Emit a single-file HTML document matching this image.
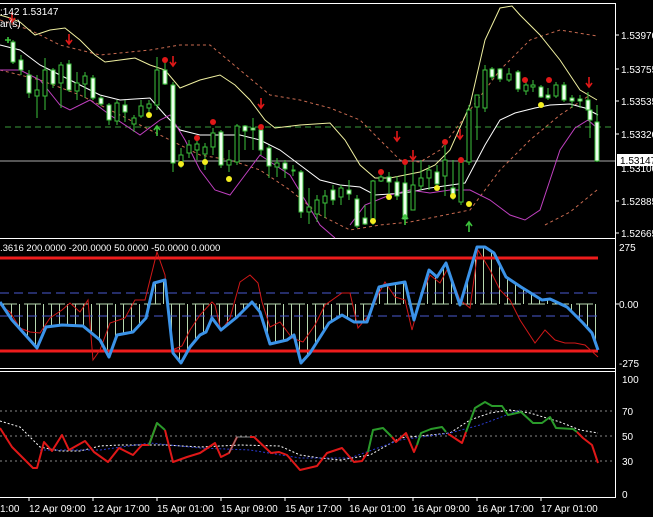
<!DOCTYPE html>
<html><head><meta charset="utf-8"><style>
html,body{margin:0;padding:0;background:#000;width:653px;height:517px;overflow:hidden}
svg{display:block}
text{font-family:"Liberation Sans",sans-serif;font-size:10px;fill:#fff}
</style></head><body>
<svg width="653" height="517" viewBox="0 0 653 517">
<defs>
<pattern id="vl" width="8" height="10" patternUnits="userSpaceOnUse"><rect x="3" y="0" width="1" height="10" fill="#b8d8b0"/></pattern>
<clipPath id="c1"><polygon points="0,302 12,320 37,348 46,327 62,325 83,326 100,340 109,357 117,335 133,332 146,318 154,283 165,280 173,353 181,363 190,347 200,335 206,332 212,318 221,330 237,317 252,302 260,312 270,344 287,340 294,335 301,363 310,353 329,323 342,315 354,322 367,322 379,287 387,285 405,282 414,320 429,270 437,277 446,263 460,305 477,247 485,247 494,253 506,277 521,287 542,300 550,299 567,307 583,323 592,333 598,350 598,304 0,304"/></clipPath>
</defs>
<!-- frames -->
<g stroke="#fff" stroke-width="1" fill="none">
<line x1="0" y1="3.5" x2="616" y2="3.5"/>
<line x1="615.5" y1="3" x2="615.5" y2="498"/>
<line x1="0" y1="238.5" x2="616" y2="238.5"/>
<line x1="0" y1="368.5" x2="616" y2="368.5"/>
<line x1="0" y1="371.5" x2="616" y2="371.5"/>
<line x1="0" y1="497.5" x2="616" y2="497.5"/>
</g>
<!-- main chart -->
<line x1="5" y1="127" x2="615" y2="127" stroke="#3a9a3a" stroke-dasharray="6,4"/>
<line x1="0" y1="161" x2="615" y2="161" stroke="#aaa"/>
<g fill="none" stroke-width="1">
<polyline stroke="#c86a50" stroke-dasharray="3,3" points="0,20 30,30 60,45 100,55 150,50 180,45 210,45 240,70 270,95 300,100 330,108 360,120 380,140 400,160 420,162 440,150 470,110 500,70 530,40 560,30 597,36"/>
<polyline stroke="#c86a50" stroke-dasharray="3,3" points="0,70 40,80 80,95 110,110 140,125 170,140 200,155 230,160 260,170 290,190 320,215 350,230 380,225 410,222 430,218 470,210 500,170 530,140 560,115 590,95"/>
<polyline stroke="#c86a50" stroke-dasharray="3,3" points="545,225 570,212 597,190"/>
<polyline stroke="#f0f0a0" points="0,15 10,18 20,22 35,35 50,30 65,28 80,40 95,55 105,62 120,60 135,58 150,65 165,70 180,88 200,80 220,75 235,85 250,100 265,120 275,128 300,125 330,123 345,140 360,165 375,178 390,178 405,175 420,172 435,165 450,150 470,105 485,40 500,8 512,6 520,15 540,35 560,60 580,90 597,100"/>
<polyline stroke="#fff" points="0,45 20,50 40,65 60,75 80,85 100,95 120,100 150,98 165,115 180,130 200,135 220,135 240,135 260,140 280,150 300,165 320,180 340,185 360,187 375,195 390,194 410,192 430,188 465,183 485,145 500,120 515,113 535,108 550,105 570,104 585,108 598,115"/>
<polyline stroke="#c040c0" points="0,70 20,70 40,80 60,105 70,110 90,100 110,115 140,135 160,120 170,115 185,140 200,170 215,190 230,195 245,175 260,155 275,165 290,175 305,200 320,225 335,238"/>
<polyline stroke="#c040c0" points="350,225 365,205 390,195 410,190 430,193 450,190 470,190 490,200 510,215 525,220 540,210 550,180 560,150 575,128 588,120 597,128"/>
</g>
<!-- candles -->
<g id="candles" stroke="#3cc23c" stroke-width="1">
<line x1="13" y1="40" x2="13" y2="64"/><rect x="11" y="42" width="4" height="20" fill="#efe"/>
<line x1="21" y1="55" x2="21" y2="75"/><rect x="19" y="60" width="4" height="10" fill="#efe"/>
<line x1="29" y1="70" x2="29" y2="98"/><rect x="27" y="75" width="4" height="18" fill="#efe"/>
<line x1="37" y1="75" x2="37" y2="118"/><rect x="35" y="90" width="4" height="6" fill="#000"/>
<line x1="45" y1="58" x2="45" y2="110"/><rect x="43" y="70" width="4" height="26" fill="#000"/>
<line x1="53" y1="68" x2="53" y2="88"/><rect x="51" y="70" width="4" height="14" fill="#efe"/>
<line x1="61" y1="62" x2="61" y2="108"/><rect x="59" y="65" width="4" height="18" fill="#000"/>
<line x1="69" y1="60" x2="69" y2="92"/><rect x="67" y="64" width="4" height="26" fill="#efe"/>
<line x1="77" y1="72" x2="77" y2="100"/><rect x="75" y="83" width="4" height="8" fill="#000"/>
<line x1="85" y1="72" x2="85" y2="98"/><rect x="83" y="76" width="4" height="8" fill="#000"/>
<line x1="93" y1="75" x2="93" y2="100"/><rect x="91" y="78" width="4" height="20" fill="#efe"/>
<line x1="101" y1="96" x2="101" y2="106"/><rect x="99" y="98" width="4" height="6" fill="#efe"/>
<line x1="109" y1="103" x2="109" y2="125"/><rect x="107" y="105" width="4" height="15" fill="#efe"/>
<line x1="117" y1="100" x2="117" y2="125"/><rect x="115" y="103" width="4" height="18" fill="#000"/>
<line x1="125" y1="100" x2="125" y2="122"/><rect x="123" y="105" width="4" height="7" fill="#efe"/>
<line x1="134" y1="115" x2="134" y2="132"/><rect x="132" y="118" width="4" height="6" fill="#000"/>
<line x1="141" y1="100" x2="141" y2="118"/><rect x="139" y="106" width="4" height="10" fill="#000"/>
<line x1="149" y1="100" x2="149" y2="112"/><rect x="147" y="104" width="4" height="4" fill="#000"/>
<line x1="157" y1="57" x2="157" y2="110"/><rect x="155" y="70" width="4" height="35" fill="#000"/>
<line x1="165" y1="62" x2="165" y2="85"/><rect x="163" y="70" width="4" height="14" fill="#efe"/>
<line x1="173" y1="82" x2="173" y2="172"/><rect x="171" y="85" width="4" height="78" fill="#efe"/>
<line x1="181" y1="148" x2="181" y2="168"/><rect x="179" y="155" width="4" height="8" fill="#000"/>
<line x1="189" y1="140" x2="189" y2="158"/><rect x="187" y="145" width="4" height="8" fill="#000"/>
<line x1="197" y1="140" x2="197" y2="160"/><rect x="195" y="144" width="4" height="6" fill="#000"/>
<line x1="205" y1="143" x2="205" y2="170"/><rect x="203" y="147" width="4" height="7" fill="#000"/>
<line x1="213" y1="128" x2="213" y2="155"/><rect x="211" y="133" width="4" height="14" fill="#000"/>
<line x1="221" y1="130" x2="221" y2="168"/><rect x="219" y="132" width="4" height="33" fill="#efe"/>
<line x1="229" y1="150" x2="229" y2="172"/><rect x="227" y="160" width="4" height="5" fill="#000"/>
<line x1="237" y1="124" x2="237" y2="165"/><rect x="235" y="126" width="4" height="36" fill="#000"/>
<line x1="245" y1="125" x2="245" y2="150"/><rect x="243" y="126" width="4" height="5" fill="#efe"/>
<line x1="253" y1="118" x2="253" y2="150"/><rect x="251" y="128" width="4" height="2" fill="#efe"/>
<line x1="261" y1="130" x2="261" y2="155"/><rect x="259" y="130" width="4" height="20" fill="#efe"/>
<line x1="269" y1="145" x2="269" y2="178"/><rect x="267" y="148" width="4" height="18" fill="#efe"/>
<line x1="277" y1="158" x2="277" y2="177"/><rect x="275" y="163" width="4" height="4" fill="#000"/>
<line x1="285" y1="160" x2="285" y2="178"/><rect x="283" y="163" width="4" height="6" fill="#efe"/>
<line x1="293" y1="165" x2="293" y2="176"/><rect x="292" y="170" width="3" height="1" fill="#000"/>
<line x1="301" y1="170" x2="301" y2="218"/><rect x="299" y="172" width="4" height="40" fill="#efe"/>
<line x1="309" y1="188" x2="309" y2="224"/><rect x="307" y="207" width="4" height="5" fill="#000"/>
<line x1="317" y1="195" x2="317" y2="222"/><rect x="315" y="200" width="4" height="14" fill="#000"/>
<line x1="325" y1="190" x2="325" y2="218"/><rect x="323" y="196" width="4" height="7" fill="#000"/>
<line x1="333" y1="185" x2="333" y2="205"/><rect x="331" y="190" width="4" height="10" fill="#efe"/>
<line x1="341" y1="185" x2="341" y2="205"/><rect x="339" y="188" width="4" height="9" fill="#000"/>
<line x1="349" y1="180" x2="349" y2="200"/><rect x="347" y="190" width="4" height="4" fill="#efe"/>
<line x1="357" y1="195" x2="357" y2="228"/><rect x="355" y="199" width="4" height="27" fill="#efe"/>
<line x1="365" y1="205" x2="365" y2="225"/><rect x="363" y="218" width="4" height="6" fill="#efe"/>
<line x1="373" y1="180" x2="373" y2="225"/><rect x="371" y="181" width="4" height="40" fill="#000"/>
<line x1="381" y1="172" x2="381" y2="182"/><rect x="379" y="177" width="4" height="4" fill="#000"/>
<line x1="389" y1="172" x2="389" y2="195"/><rect x="387" y="177" width="4" height="5" fill="#efe"/>
<line x1="397" y1="176" x2="397" y2="200"/><rect x="395" y="182" width="4" height="14" fill="#efe"/>
<line x1="405" y1="160" x2="405" y2="220"/><rect x="403" y="183" width="4" height="36" fill="#efe"/>
<line x1="413" y1="162" x2="413" y2="210"/><rect x="411" y="185" width="4" height="25" fill="#000"/>
<line x1="421" y1="160" x2="421" y2="190"/><rect x="419" y="178" width="4" height="8" fill="#000"/>
<line x1="429" y1="165" x2="429" y2="190"/><rect x="427" y="170" width="4" height="8" fill="#000"/>
<line x1="437" y1="165" x2="437" y2="188"/><rect x="435" y="172" width="4" height="12" fill="#efe"/>
<line x1="445" y1="145" x2="445" y2="196"/><rect x="443" y="160" width="4" height="16" fill="#000"/>
<line x1="453" y1="160" x2="453" y2="200"/><rect x="451" y="188" width="4" height="8" fill="#efe"/>
<line x1="461" y1="160" x2="461" y2="205"/><rect x="459" y="162" width="4" height="40" fill="#000"/>
<line x1="469" y1="105" x2="469" y2="165"/><rect x="467" y="110" width="4" height="52" fill="#000"/>
<line x1="477" y1="95" x2="477" y2="140"/><rect x="475" y="95" width="4" height="12" fill="#000"/>
<line x1="485" y1="65" x2="485" y2="112"/><rect x="483" y="70" width="4" height="38" fill="#000"/>
<line x1="492" y1="67" x2="492" y2="80"/><rect x="490" y="69" width="4" height="8" fill="#efe"/>
<line x1="500" y1="68" x2="500" y2="82"/><rect x="498" y="69" width="4" height="10" fill="#efe"/>
<line x1="509" y1="68" x2="509" y2="82"/><rect x="507" y="74" width="4" height="6" fill="#000"/>
<line x1="518" y1="70" x2="518" y2="92"/><rect x="516" y="72" width="4" height="17" fill="#efe"/>
<line x1="526" y1="78" x2="526" y2="95"/><rect x="524" y="85" width="4" height="6" fill="#000"/>
<line x1="533" y1="80" x2="533" y2="92"/><rect x="531" y="85" width="4" height="2" fill="#000"/>
<line x1="541" y1="85" x2="541" y2="98"/><rect x="539" y="87" width="4" height="10" fill="#efe"/>
<line x1="548" y1="88" x2="548" y2="100"/><rect x="546" y="95" width="4" height="3" fill="#efe"/>
<line x1="556" y1="82" x2="556" y2="98"/><rect x="554" y="85" width="4" height="11" fill="#000"/>
<line x1="564" y1="82" x2="564" y2="102"/><rect x="562" y="85" width="4" height="15" fill="#efe"/>
<line x1="572" y1="95" x2="572" y2="108"/><rect x="570" y="98" width="4" height="3" fill="#efe"/>
<line x1="580" y1="95" x2="580" y2="108"/><rect x="578" y="99" width="4" height="2" fill="#efe"/>
<line x1="588" y1="92" x2="588" y2="112"/><rect x="586" y="100" width="4" height="10" fill="#efe"/>
<line x1="590" y1="112" x2="590" y2="138"/><rect x="588" y="110" width="4" height="10" fill="#efe"/>
<line x1="597" y1="105" x2="597" y2="162"/><rect x="595" y="122" width="4" height="39" fill="#efe"/>
</g>
<!-- dots -->
<g fill="#e01818">
<circle cx="165" cy="60" r="3"/><circle cx="213" cy="122" r="3"/><circle cx="197" cy="138" r="3"/><circle cx="261" cy="127" r="3"/><circle cx="381" cy="172" r="3"/><circle cx="405" cy="162" r="3"/><circle cx="445" cy="142" r="3"/><circle cx="461" cy="160" r="3"/><circle cx="525" cy="80" r="3"/><circle cx="549" cy="80" r="3"/>
</g>
<g fill="#f4ee20">
<circle cx="149" cy="115" r="3"/><circle cx="181" cy="164" r="3"/><circle cx="205" cy="162" r="3"/><circle cx="229" cy="179" r="3"/><circle cx="373" cy="221" r="3"/><circle cx="389" cy="197" r="3"/><circle cx="437" cy="188" r="3"/><circle cx="453" cy="196" r="3"/><circle cx="469" cy="204" r="3"/><circle cx="541" cy="105" r="3"/>
</g>
<g stroke="#e01818" stroke-width="1.6" fill="none">
<path d="M12,12v9M9,18l3,4l3,-4"/><path d="M69,34v9M66,40l3,4l3,-4"/><path d="M173,56v9M170,62l3,4l3,-4"/><path d="M261,98v9M258,104l3,4l3,-4"/><path d="M397,131v9M394,137l3,4l3,-4"/><path d="M413,150v9M410,156l3,4l3,-4"/><path d="M460,129v9M457,135l3,4l3,-4"/><path d="M589,77v9M586,83l3,4l3,-4"/><path d="M66,0v0"/>
</g>
<g stroke="#3cc23c" stroke-width="1.6" fill="none">
<path d="M157,136v-9M154,130l3,-4l3,4"/><path d="M405,225v-9M402,219l3,-4l3,4"/><path d="M469,232v-9M466,226l3,-4l3,4"/><path d="M5,40h6M8,37v6"/>
</g>
<text x="0" y="15" style="font-size:10px">:142 1.53147</text>
<text x="0" y="27" style="font-size:10px">ar(s)</text>
<!-- price axis -->
<g>
<line x1="616" y1="35" x2="619" y2="35" stroke="#fff"/><text x="621" y="39">1.53970</text>
<line x1="616" y1="69" x2="619" y2="69" stroke="#fff"/><text x="621" y="73">1.53755</text>
<line x1="616" y1="101" x2="619" y2="101" stroke="#fff"/><text x="621" y="105">1.53535</text>
<line x1="616" y1="134" x2="619" y2="134" stroke="#fff"/><text x="621" y="138">1.53320</text>
<text x="621" y="172">1.53100</text>
<rect x="617" y="154" width="36" height="12" fill="#fff"/><text x="620" y="164" style="fill:#000">1.53147</text>
<line x1="616" y1="201" x2="619" y2="201" stroke="#fff"/><text x="621" y="205">1.52885</text>
<line x1="616" y1="233" x2="619" y2="233" stroke="#fff"/><text x="621" y="237">1.52665</text>
</g>
<!-- panel 1 -->
<rect x="0" y="304" width="598" height="60" fill="url(#vl)" clip-path="url(#c1)"/>
<rect x="0" y="240" width="598" height="64" fill="url(#vl)" clip-path="url(#c1)"/>
<line x1="0" y1="304" x2="598" y2="304" stroke="#b8d8b0" stroke-dasharray="17,7"/>
<line x1="0" y1="293" x2="598" y2="293" stroke="#4a5ad0" stroke-dasharray="9,5"/>
<line x1="0" y1="316" x2="598" y2="316" stroke="#4a5ad0" stroke-dasharray="9,5"/>
<line x1="0" y1="258" x2="598" y2="258" stroke="#ee1c1c" stroke-width="3"/>
<line x1="0" y1="351" x2="598" y2="351" stroke="#ee1c1c" stroke-width="3"/>
<polyline fill="none" stroke="#d01818" stroke-width="1" points="0,305 10,312 20,328 30,332 40,333 50,318 62,310 70,303 80,312 88,300 93,360 100,350 110,323 125,318 135,300 145,300 157,252 165,275 172,350 182,346 190,330 200,315 212,302 215,305 221,331 230,318 240,282 250,275 258,283 262,302 270,327 280,322 292,338 303,342 315,325 325,305 342,293 350,293 358,328 370,314 378,295 385,282 395,297 405,300 412,330 420,300 430,275 440,283 448,268 460,300 470,308 478,250 490,270 500,290 510,300 520,320 535,343 545,330 555,340 565,343 575,343 585,345 598,357"/>
<polyline fill="none" stroke="#3b93e8" stroke-width="3" stroke-linejoin="round" points="0,302 12,320 37,348 46,327 62,325 83,326 100,340 109,357 117,335 133,332 146,318 154,283 165,280 173,353 181,363 190,347 200,335 206,332 212,318 221,330 237,317 252,302 260,312 270,344 287,340 294,335 301,363 310,353 329,323 342,315 354,322 367,322 379,287 387,285 405,282 414,320 429,270 437,277 446,263 460,305 477,247 485,247 494,253 506,277 521,287 542,300 550,299 567,307 583,323 592,333 598,350"/>
<text x="0" y="251" style="font-size:9.5px">.3616 200.0000 -200.0000 50.0000 -50.0000 0.0000</text>
<text x="619" y="251">275</text><line x1="616" y1="304" x2="619" y2="304" stroke="#fff"/><text x="619" y="308">0.00</text><text x="619" y="367">-275</text>
<!-- panel 2 -->
<g stroke="#888" stroke-dasharray="2,3"><line x1="0" y1="411" x2="615" y2="411"/><line x1="0" y1="436" x2="615" y2="436"/><line x1="0" y1="461" x2="615" y2="461"/></g>
<polyline fill="none" stroke="#fff" stroke-dasharray="2,2" points="0,421 20,427 40,447 60,451 80,451 100,446 120,445 165,445 200,447 240,445 280,446 300,455 320,458 340,460 370,455 400,438 420,436 450,433 470,420 490,413 510,410 530,413 560,422 580,430 598,433"/>
<polyline fill="none" stroke="#2a3ad0" stroke-dasharray="2,2" points="40,450 100,450 150,443 200,448 250,450 300,458 350,458 400,440 450,433 480,425 520,410"/>
<g fill="none" stroke-width="2" stroke-linejoin="round">
<polyline stroke="#e01818" points="0,428 12,447 33,468 37,468 44,442 52,451 62,435 69,450 85,441 94,452 108,462 119,448 133,455 142,445 149,445 157,423"/>
<polyline stroke="#2a9a2a" points="149,445 157,423 165,430"/>
<polyline stroke="#e01818" points="165,430 173,462 187,457 200,453 215,443 221,457 229,453 237,437"/>
<polyline stroke="#888" stroke-width="1" points="229,453 237,437 254,437"/>
<polyline stroke="#e01818" points="250,437 254,437 271,453 279,452 287,455 300,470 317,466 327,453 342,448 354,462 362,461 368,452"/>
<polyline stroke="#2a9a2a" points="368,452 373,430 383,428 392,437"/>
<polyline stroke="#e01818" points="392,437 396,442 406,433 414,452 417,445"/>
<polyline stroke="#2a9a2a" points="417,445 421,433 431,429 442,427 446,432"/>
<polyline stroke="#e01818" points="448,434 450,435 462,443 466,432"/>
<polyline stroke="#2a9a2a" points="466,432 475,408 485,402 492,406 502,406 508,415 521,412 533,423 542,423 550,417 556,428 573,429 577,432"/>
<polyline stroke="#e01818" points="577,432 583,438 592,445 598,463"/>
</g>
<text x="622" y="383">100</text><text x="622" y="415">70</text><text x="622" y="440">50</text><text x="622" y="465">30</text><text x="622" y="498">0</text>
<!-- time axis -->
<g>
<text x="0" y="512">1:00</text>
<line x1="29" y1="498" x2="29" y2="501" stroke="#fff"/><text x="29" y="512">12 Apr 09:00</text>
<line x1="93" y1="498" x2="93" y2="501" stroke="#fff"/><text x="93" y="512">12 Apr 17:00</text>
<line x1="157" y1="498" x2="157" y2="501" stroke="#fff"/><text x="157" y="512">15 Apr 01:00</text>
<line x1="221" y1="498" x2="221" y2="501" stroke="#fff"/><text x="221" y="512">15 Apr 09:00</text>
<line x1="285" y1="498" x2="285" y2="501" stroke="#fff"/><text x="285" y="512">15 Apr 17:00</text>
<line x1="349" y1="498" x2="349" y2="501" stroke="#fff"/><text x="349" y="512">16 Apr 01:00</text>
<line x1="413" y1="498" x2="413" y2="501" stroke="#fff"/><text x="413" y="512">16 Apr 09:00</text>
<line x1="477" y1="498" x2="477" y2="501" stroke="#fff"/><text x="477" y="512">16 Apr 17:00</text>
<line x1="541" y1="498" x2="541" y2="501" stroke="#fff"/><text x="541" y="512">17 Apr 01:00</text>
</g>
</svg>
</body></html>
